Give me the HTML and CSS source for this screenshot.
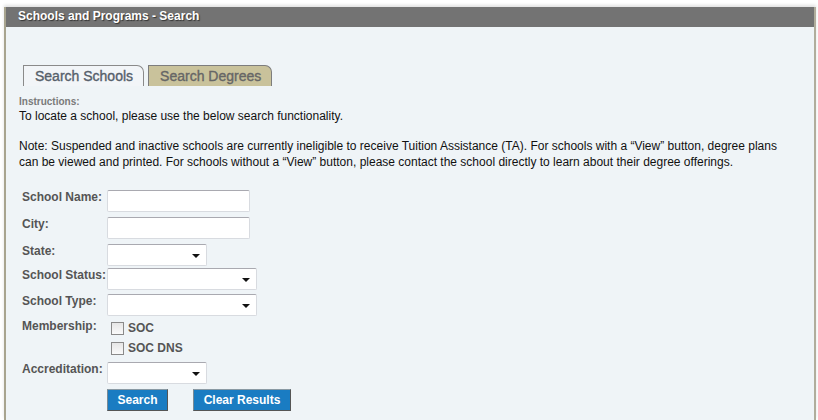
FILE: index.html
```html
<!DOCTYPE html>
<html>
<head>
<meta charset="utf-8">
<link rel="stylesheet" href="styles.css">
</head>
<body>
<div class="panel">
  <div class="panel-head">Schools and Programs - Search</div>
  <div class="panel-body">
    <div class="tabs">
      <div class="tab active">Search Schools</div>
      <div class="tab">Search Degrees</div>
    </div>
    <div class="instr-label">Instructions:</div>
    <p class="text">To locate a school, please use the below search functionality.</p>
    <p class="text note">Note: Suspended and inactive schools are currently ineligible to receive Tuition Assistance (TA). For schools with a “View” button, degree plans can be viewed and printed. For schools without a “View” button, please contact the school directly to learn about their degree offerings.</p>
    <div class="form">
      <div class="row r-name"><label>School Name:</label><span class="input wide"></span></div>
      <div class="row r-city"><label>City:</label><span class="input wide"></span></div>
      <div class="row r-state"><label>State:</label><span class="select short"></span></div>
      <div class="row r-status"><label>School Status:</label><span class="select long"></span></div>
      <div class="row r-type"><label>School Type:</label><span class="select long"></span></div>
      <div class="row r-member"><label>Membership:</label>
        <div class="checks">
          <div class="check"><span class="box"></span>SOC</div>
          <div class="check"><span class="box"></span>SOC DNS</div>
        </div>
      </div>
      <div class="row r-accr"><label>Accreditation:</label><span class="select short"></span></div>
      <div class="row r-btns"><span></span>
        <div class="buttons"><button class="btn">Search</button><button class="btn btn-clear">Clear Results</button></div>
      </div>
    </div>
  </div>
</div>
</body>
</html>
```
FILE: styles.css
```css
html, body { margin: 0; padding: 0; background: #ffffff; }
body { font-family: "Liberation Sans", Arial, sans-serif; font-size: 12px; color: #000; }

.panel {
  margin: 7px 2px 0 4px;
  height: 413px;
  border-left: 2px solid #a8a48f;
  border-right: 2px solid #b0ad9c;
  background: #eff4f7;
  box-shadow: 0 -2px 3px rgba(0,0,0,0.12);
  box-sizing: border-box;
}
.panel-head {
  background: #737373;
  height: 20px;
  line-height: 19px;
  color: #fff;
  font-weight: bold;
  font-size: 12px;
  padding-left: 12px;
  text-shadow: 1px 1px 1px #333;
}
.panel-body { padding: 38px 16px 0 13px; }

.tabs { display: flex; gap: 4px; padding-left: 4px; height: 21px; }
.tab {
  box-sizing: border-box;
  height: 21px;
  padding: 2px 10px 0 11px;
  font-size: 14px;
  color: #666;
  background: #c9c29b;
  border: 1px solid #7d7d7d;
  border-bottom: none;
  border-top-right-radius: 7px;
  font-weight: normal;
  -webkit-text-stroke: 0.35px #666;
}
.tab.active {
  background: #f2f5f8;
  color: #56606b;
  border-color: #8a8a8a;
  -webkit-text-stroke: 0.35px #56606b;
}

.instr-label {
  margin-top: 10px;
  font-size: 10px;
  font-weight: bold;
  color: #7a7a7a;
  line-height: 12px;
}
.text { margin: 0; line-height: 16px; color: #111; }
.note { margin-top: 14px; }

.form { margin-top: 20px; padding-left: 3px; }
.row { display: grid; grid-template-columns: 85px auto; align-items: start; }
.row label {
  font-weight: bold;
  color: #555;
  padding-top: 0;
  line-height: 14px;
  white-space: nowrap;
}
.r-city { margin-top: 5px; }
.r-state { margin-top: 5px; }
.r-status { margin-top: 2px; }
.r-type { margin-top: 4px; }
.r-member { margin-top: 1px; }
.r-member label { padding-top: 2px; }
.r-accr { margin-top: 7px; }
.r-btns { margin-top: 5px; }

.input, .select {
  display: block;
  box-sizing: border-box;
  height: 22px;
  background: #fff;
  border: 1px solid #d8dbe0;
  border-top-color: #a9a9b0;
  border-radius: 2px;
  position: relative;
}
.wide { width: 143px; }
.short { width: 100px; }
.long { width: 150px; }
.select::after {
  content: "";
  position: absolute;
  right: 6px;
  top: 9px;
  border-left: 4px solid transparent;
  border-right: 4px solid transparent;
  border-top: 4px solid #111;
}

.checks { padding-left: 4px; padding-top: 5px; }
.check {
  display: flex;
  align-items: center;
  gap: 4px;
  font-weight: bold;
  color: #555;
  height: 13px;
  line-height: 13px;
  margin-bottom: 7px;
}
.check:last-child { margin-bottom: 0; }
.box {
  display: inline-block;
  width: 11px;
  height: 11px;
  border: 1px solid #8a8a8a;
  background: linear-gradient(#e6e6e6, #fafafa);
}

.buttons { display: flex; gap: 25px; }
.btn {
  box-sizing: border-box;
  height: 22px;
  padding: 0;
  background: #1a7cc2;
  color: #fff;
  font-family: "Liberation Sans", Arial, sans-serif;
  font-weight: bold;
  font-size: 12px;
  white-space: nowrap;
  border: 1px solid #555;
  border-top-color: #8a9aa4;
  border-left-color: #7a8a94;
  border-radius: 0;
  width: 61px;
}
.btn-clear { width: 98px; }
```
